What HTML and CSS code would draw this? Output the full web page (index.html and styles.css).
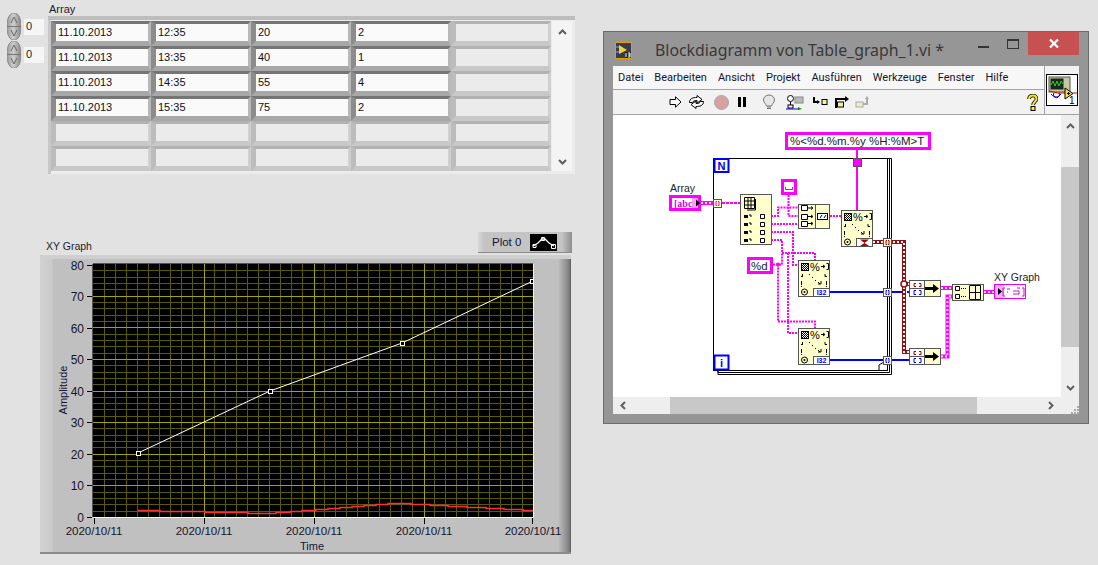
FILE: index.html
```html
<!DOCTYPE html>
<html lang="de">
<head>
<meta charset="utf-8">
<title>Table_graph_1.vi</title>
<link rel="stylesheet" href="styles.css">
</head>
<body>
<svg class="defs" width="0" height="0">
  <defs>
    <linearGradient id="spin" x1="0" x2="1" y1="0" y2="0">
      <stop offset="0" stop-color="#9a9a9a"/><stop offset=".45" stop-color="#cfcfcf"/><stop offset="1" stop-color="#858585"/>
    </linearGradient>
    <symbol id="spinner" viewBox="0 0 14 27">
      <path d="M7 0C11 0 14 4 14 13.500C14 23 11 27 7 27C3 27 0 23 0 13.500C0 4 3 0 7 0Z" fill="url(#spin)" stroke="#8a8a8a"/>
      <path d="M0 13.500H14" stroke="#777"/>
      <path d="M4 10L7 4L10 10M4 17L7 23L10 17" fill="none" stroke="#666"/>
    </symbol>
    <symbol id="checker" viewBox="0 0 8 8">
      <rect width="8" height="8" fill="#000"/>
      <path d="M1 1h1v1h-1zM3 1h1v1h-1zM5 1h1v1h-1zM2 2h1v1h-1zM4 2h1v1h-1zM6 2h1v1h-1zM1 3h1v1h-1zM3 3h1v1h-1zM5 3h1v1h-1zM2 4h1v1h-1zM4 4h1v1h-1zM6 4h1v1h-1zM1 5h1v1h-1zM3 5h1v1h-1zM5 5h1v1h-1zM2 6h1v1h-1zM4 6h1v1h-1zM6 6h1v1h-1z" fill="#fff"/>
    </symbol>
    <symbol id="fmt" viewBox="0 0 33 38">
      <rect x=".5" y=".5" width="31" height="36" class="node"/>
      <use href="#checker" x="3" y="3" width="8" height="8"/>
      <text x="12" y="11" class="pct">%</text>
      <path d="M23 6.500H26M25 5L27 6.500L25 8M28.500 3.500H30.500V9.500H28.500" fill="none" stroke="#000"/>
      <path d="M3 16.500H5M4.500 14V16M27 14V16.500H29" fill="none" stroke="#000"/>
      <path d="M11 14l1 1M14 17l1 1M17 20l1 1M20 22l2 2M20 24h3v-3" fill="none" stroke="#000"/>
      <path d="M3.500 21V25M3.500 26V27M28.500 21V25M28.500 26V27" stroke="#000"/>
      <circle cx="6.500" cy="32" r="3" fill="none" stroke="#000"/>
      <circle cx="6.500" cy="32" r="1" fill="#000"/>
    </symbol>
    <symbol id="bundle" viewBox="0 0 33 18">
      <rect x=".5" y=".5" width="31" height="16" class="node"/>
      <rect x="1" y="1" width="14" height="15" fill="#fff"/>
      <path d="M.5 8.500H15.500M15.500 .5V16.500" stroke="#555" fill="none"/>
      <path d="M7 3.500H5V6.500H7M10 3.500H12V6.500H10" fill="none" stroke="#a00000"/>
      <path d="M7 10.500H5V14.500H7M10 10.500H12V14.500H10" fill="none" stroke="#0000ff"/>
      <path d="M16 7H24V4L30 8.500L24 13V10H16Z" fill="#000"/>
    </symbol>
  </defs>
</svg>

<section class="indices">
  <div class="index">
    <svg class="spinner" width="14" height="27"><use href="#spinner"/></svg>
    <div class="index-box">0</div>
  </div>
  <div class="index">
    <svg class="spinner" width="14" height="27"><use href="#spinner"/></svg>
    <div class="index-box">0</div>
  </div>
</section>

<section class="array">
  <div class="label array-label">Array</div>
  <div class="array-frame">
    <div class="cells">
      <div class="cell">11.10.2013</div><div class="cell">12:35</div><div class="cell">20</div><div class="cell">2</div><div class="cell off"></div>
      <div class="cell">11.10.2013</div><div class="cell">13:35</div><div class="cell">40</div><div class="cell">1</div><div class="cell off"></div>
      <div class="cell">11.10.2013</div><div class="cell">14:35</div><div class="cell">55</div><div class="cell">4</div><div class="cell off"></div>
      <div class="cell">11.10.2013</div><div class="cell">15:35</div><div class="cell">75</div><div class="cell">2</div><div class="cell off"></div>
      <div class="cell off"></div><div class="cell off"></div><div class="cell off"></div><div class="cell off"></div><div class="cell off"></div>
      <div class="cell off"></div><div class="cell off"></div><div class="cell off"></div><div class="cell off"></div><div class="cell off"></div>
    </div>
    <div class="array-scroll">
      <svg width="9" height="6"><path d="M1 5L4.500 1.500L8 5" fill="none" stroke="#5c5c5c" stroke-width="2"/></svg>
      <svg width="9" height="6"><path d="M1 1L4.500 4.500L8 1" fill="none" stroke="#5c5c5c" stroke-width="2"/></svg>
    </div>
  </div>
</section>

<div class="label graph-label">XY Graph</div>

<div class="legend">
  <span class="legend-name">Plot 0</span>
  <svg class="legend-swatch" width="27" height="17" viewBox="0 0 27 17">
    <rect width="27" height="17" fill="#000"/>
    <path d="M3 12L8 9L12 5H15L19 9L24 12" fill="none" stroke="#fff" stroke-width="1.300"/>
    <path d="M3 10.500h3v3h-3zM11.500 3.500h3v3h-3zM21.500 10.500h4v4h-4z" fill="none" stroke="#fff"/>
  </svg>
</div>

<section class="graph">
  <svg class="plot" width="531" height="299" viewBox="40 255 531 299">
    <rect x="93" y="264" width="440" height="253" fill="#000"/>
    <path class="minor" d="M104 264V517M115 264V517M126 264V517M137 264V517M148 264V517M159 264V517M170 264V517M181 264V517M192 264V517M214.500 264V517M225 264V517M236 264V517M247 264V517M258 264V517M269 264V517M280 264V517M291 264V517M302 264V517M324 264V517M335 264V517M346 264V517M357 264V517M368 264V517M379 264V517M390 264V517M401 264V517M412 264V517M434 264V517M445 264V517M456 264V517M467 264V517M478 264V517M489 264V517M500 264V517M511 264V517M522 264V517"/>
    <path class="minor" d="M93 270H533M93 277H533M93 283H533M93 289H533M93 302H533M93 308H533M93 315H533M93 321H533M93 334H533M93 340H533M93 346H533M93 353H533M93 365H533M93 372H533M93 378H533M93 384H533M93 397H533M93 403H533M93 409H533M93 416H533M93 428H533M93 435H533M93 441H533M93 447H533M93 460H533M93 466H533M93 473H533M93 479H533M93 492H533M93 498H533M93 504H533M93 511H533"/>
    <path class="major" d="M204 264V517M314 264V517M424 264V517M93 296H533M93 327H533M93 359H533M93 391H533M93 422H533M93 454H533M93 485H533"/>
    <path class="plot-edge-dark" d="M92.500 264V517M93 263.500H533"/>
    <path class="plot-edge-light" d="M533.500 264V517.500M93 517.500H533"/>
    <polyline class="trace-white" points="138,453 270,391 402,343 533,281"/>
    <path class="trace-red" d="M138 510.500H160V511.500H205V512.500H248V513.500H276V512.500H290V511.500H302V510.500H316V509.500H328V508.500H340V507.500H352V506.500H364V505.500H376V504.500H388V503.500H411V504.500H430V505.500H448V506.500H467V507.500H486V508.500H504V509.500H523V510.500H533"/>
    <path class="marker" d="M136 451h4v4h-4zM268 389h4v4h-4zM400 341h4v4h-4zM530.500 279h2.500v4h-2.500z"/>
    <path class="tick" d="M87 265H92M87 296.500H92M87 328H92M87 359.500H92M87 391.500H92M87 422.500H92M87 454H92M87 485.500H92M87 517H92M94 518V524M204.500 518V524M314.500 518V524M424.500 518V524M532.500 518V524"/>
    <g class="ytext">
      <text x="84" y="270">80</text><text x="84" y="301">70</text><text x="84" y="333">60</text><text x="84" y="364">50</text><text x="84" y="396">40</text><text x="84" y="427">30</text><text x="84" y="459">20</text><text x="84" y="490">10</text><text x="84" y="522">0</text>
    </g>
    <g class="xtext">
      <text x="94" y="535">2020/10/11</text><text x="204" y="535">2020/10/11</text><text x="314" y="535">2020/10/11</text><text x="424" y="535">2020/10/11</text><text x="533" y="535">2020/10/11</text>
    </g>
    <text class="axis" x="312" y="550">Time</text>
    <text class="axis" transform="translate(67 390) rotate(-90)">Amplitude</text>
  </svg>
</section>

<section class="window">
  <header class="titlebar">
    <svg class="app-icon" width="17" height="17" viewBox="0 0 17 17">
      <rect x=".5" y=".5" width="16" height="16" fill="#3a3a4a" stroke="#e0a000"/>
      <path d="M4 3L12 8L4 12Z" fill="#ecd040"/>
      <path d="M1 5H4M1 10H4" stroke="#6ab0ff"/>
      <rect x="10" y="10" width="6" height="6" fill="#222"/>
      <path d="M11 11V15M13 11H15V15H13M13 13H15" stroke="#fff" fill="none"/>
    </svg>
    <h1 class="title">Blockdiagramm von Table_graph_1.vi *</h1>
    <div class="controls">
      <svg class="min" width="11" height="2"><rect width="11" height="2" fill="#333"/></svg>
      <svg class="max" width="12" height="10" viewBox="0 0 12 10"><rect x=".5" y=".5" width="11" height="9" fill="none" stroke="#333"/><rect x="0" y="0" width="12" height="2" fill="#333"/></svg>
      <div class="close">
        <svg width="10" height="9" viewBox="0 0 10 9"><path d="M1 .5L9 8.500M9 .5L1 8.500" stroke="#fff" stroke-width="2.200" fill="none"/></svg>
      </div>
    </div>
  </header>
  <div class="client">
    <div class="head">
      <div class="bars">
        <nav class="menu">
          <span>Datei</span><span>Bearbeiten</span><span>Ansicht</span><span>Projekt</span><span>Ausführen</span><span>Werkzeuge</span><span>Fenster</span><span>Hilfe</span>
        </nav>
        <div class="tools">
          <svg class="t-run" width="13" height="12" viewBox="0 0 13 12"><path d="M1 3.500H6.500V.8L12 6L6.500 11.200V8.500H1Z" fill="#fff" stroke="#000"/></svg>
          <svg class="t-cont" width="17" height="14" viewBox="0 0 17 14"><path d="M1.500 7.500C1.500 3.500 5 2.500 9 2.500V.5L14 4.500L9 8V5.500C6.500 5.500 5 6 4.500 7.500ZM15.500 6.500C15.500 10.500 12 11.500 8 11.500V13.500L3 9.500L8 6V8.500C10.500 8.500 12 8 12.500 6.500Z" fill="#fff" stroke="#000"/></svg>
          <svg class="t-stop" width="15" height="15" viewBox="0 0 15 15"><circle cx="7.500" cy="7.500" r="7" fill="#d9a0a0" stroke="#a8a8a8"/></svg>
          <svg class="t-pause" width="8" height="10" viewBox="0 0 8 10"><path d="M0 0H3V10H0ZM5 0H8V10H5Z" fill="#000"/></svg>
          <svg class="t-bulb" width="14" height="16" viewBox="0 0 14 16"><path d="M7 1C3.500 1 1.500 3.500 1.500 6C1.500 8.500 4 10 4.500 12H9.500C10 10 12.500 8.500 12.500 6C12.500 3.500 10.500 1 7 1Z" fill="#e6e6e6" stroke="#777"/><path d="M5 13H9M5 14.500H9" stroke="#777"/></svg>
          <svg class="t-retain" width="18" height="15" viewBox="0 0 18 15"><circle cx="4.500" cy="3.500" r="3" fill="#fff" stroke="#000"/><path d="M4.500 7V12" stroke="#000"/><rect x="9" y="2" width="8" height="6" fill="#bbb" stroke="#888"/><rect x="2" y="10" width="5" height="3" fill="#fff" stroke="#000"/><path d="M0 14H13" stroke="#00c"/><path d="M12 12L16 14L12 15Z" fill="#080"/></svg>
          <svg class="t-into" width="15" height="11" viewBox="0 0 15 11"><path d="M1 0V5H6" fill="none" stroke="#000" stroke-width="2"/><path d="M4 3L7 5L4 7Z" fill="#000"/><rect x="9" y="2.500" width="5" height="5" fill="#f5f0a0" stroke="#000"/></svg>
          <svg class="t-over" width="16" height="13" viewBox="0 0 16 13"><path d="M2 12V3H11" fill="none" stroke="#000" stroke-width="2"/><path d="M11 0L15 3L11 6Z" fill="#000"/><rect x="3.500" y="6" width="6" height="5" fill="#f5f0a0" stroke="#000"/></svg>
          <svg class="t-out" width="16" height="13" viewBox="0 0 16 13"><rect x="1" y="6" width="7" height="5" fill="#eeeec0" stroke="#aaa"/><path d="M8 8H12V3" fill="none" stroke="#aaa" stroke-width="2"/><path d="M10 3L12 0L14 3Z" fill="#aaa"/></svg>
          <svg class="t-help" width="11" height="17" viewBox="0 0 11 17"><path d="M2 5C2 2.500 4 1.500 6 1.500C8 1.500 9.500 3 9.500 5C9.500 7 6.500 8 6 11" fill="none" stroke="#000" stroke-width="3.500"/><path d="M2 5C2 2.500 4 1.500 6 1.500C8 1.500 9.500 3 9.500 5C9.500 7 6.500 8 6 11" fill="none" stroke="#ffe820" stroke-width="2"/><rect x="4" y="12.500" width="4" height="4" fill="#ffe820" stroke="#000"/></svg>
        </div>
      </div>
      <div class="vi-pane">
        <svg class="vi-icon" width="32" height="32" viewBox="0 0 32 32">
          <rect x=".5" y=".5" width="31" height="31" fill="#fff" stroke="#000"/>
          <rect x="3" y="3" width="21" height="15" fill="#c8c8a0" stroke="#555"/>
          <rect x="4.500" y="4.500" width="13" height="11" fill="#182818"/>
          <path d="M5 11L7 7L9 12L11 7L13 12L15 7L17 10" fill="none" stroke="#2fd02f"/>
          <path d="M5 20C8 24 12 24 15 20M8 19A3 3 0 1 0 13 19" fill="none" stroke="#00a"/>
          <path d="M3 17L12 19H20" stroke="#e00000" fill="none"/>
          <path d="M19 14L27 19.500L19 25Z" fill="#ffe820" stroke="#000"/>
          <path d="M21 19.500H24M22.500 18V21" stroke="#000"/>
          <path d="M27 19H31" stroke="#e00000"/>
          <text class="vi-num" x="23" y="30">1</text>
        </svg>
      </div>
    </div>
    <div class="work">
      <svg class="diagram" width="448" height="282" viewBox="613 115 448 282">
        <rect x="613" y="115" width="448" height="282" fill="#fff"/>

        <!-- loop -->
        <path class="loop-back" d="M718 371V374.500H891.500V158.500H888M718 369V372.500H889.500V158.500"/>
        <rect class="loop" x="713.500" y="158.500" width="174" height="212"/>
        <path class="loop" d="M879 370L879 365L884 362"/>
        <rect class="loop-term" x="714.500" y="159" width="14" height="13"/>
        <text class="loop-n" x="721.500" y="170">N</text>
        <rect class="loop-term" x="714.500" y="355.500" width="14" height="14"/>
        <text class="loop-n" x="721.500" y="367">i</text>

        <!-- string wires -->
        <path class="w-s" d="M771 216H778V207.500H798"/>
        <path class="w-s" d="M771 224H798"/>
        <path class="w-s" d="M788.500 195V216H798"/>
        <path class="w-s" d="M771 232H793V265H798"/>
        <path class="w-s" d="M771 240H782V253H815V260"/>
        <path class="w-s" d="M788 253V333H798"/>
        <path class="w-s" d="M773 264.500H782V253"/>
        <path class="w-s" d="M778 264.500V321.500H815V328"/>
        <path class="w-s" d="M830 216H841"/>
        <path class="w-solid" d="M857 149V210"/>
        <circle class="junction" cx="778" cy="264.500" r="2"/>

        <!-- array wires -->
        <path class="w-sa" d="M701 203H713"/>
        <path class="w-sa-d" d="M701 203H713"/>
        <path class="w-s2" d="M722 203H740"/>
        <path class="w-sa" d="M941 288H952M941 356.500H947.500V296.500H952M984 292H994"/>
        <path class="w-sa-d" d="M941 288H952M941 356.500H947.500V296.500H952M984 292H994"/>

        <!-- cluster / error wire -->
        <path class="w-r" d="M873 242H904V352H909M904 284H909"/>
        <path class="w-r-d" d="M873 242H904V352H909M904 284H909"/>
        <circle class="r-junction" cx="904" cy="284" r="3"/>

        <!-- numeric wires -->
        <path class="w-b" d="M830 292H883M892 292H902M907 292H909M830 360H883M892 360H909"/>

        <!-- tunnels -->
        <rect class="tunnel" x="713.500" y="199.500" width="8" height="8"/>
        <path class="t-pink" d="M717 201.500H716V205.500H717M718 201.500H719V205.500H718"/>
        <rect class="tunnel" x="883.500" y="238.500" width="8" height="8"/>
        <path class="t-red" d="M887 240.500H886V244.500H887M888 240.500H889V244.500H888"/>
        <rect class="tunnel" x="883.500" y="288.500" width="8" height="8"/>
        <path class="t-blue" d="M887 290.500H886V294.500H887M888 290.500H889V294.500H888"/>
        <rect class="tunnel" x="883.500" y="356.500" width="8" height="8"/>
        <path class="t-blue" d="M887 358.500H886V362.500H887M888 358.500H889V362.500H888"/>
        <rect x="853.500" y="158.500" width="8" height="8" fill="#ff00ff" stroke="#555"/>

        <!-- constants -->
        <rect class="const" x="786.500" y="133.500" width="143" height="15"/>
        <text class="const-text" x="790" y="145">%&lt;%d.%m.%y %H:%M&gt;T</text>
        <rect class="const" x="782.500" y="180.500" width="13" height="13"/>
        <path d="M785.500 187V189.500H792.500V187" fill="none" stroke="#e000e0"/>
        <rect class="const" x="748.500" y="258.500" width="23" height="14"/>
        <text class="const-text" x="751" y="270">%d</text>

        <!-- labels and terminals -->
        <text class="wire-label" x="670" y="192">Array</text>
        <rect class="const" x="670.500" y="196.500" width="29" height="13"/>
        <rect x="692" y="198" width="6" height="10" fill="#f9a0f9"/>
        <text class="term-text" x="674" y="207">[abc</text>
        <path d="M696 199.500L700 203L696 206.500Z" fill="#000"/>

        <text class="wire-label" x="994" y="281">XY Graph</text>
        <rect x="994.500" y="284.500" width="31" height="14" fill="#fff" stroke="#f000f0"/>
        <rect x="995" y="285" width="9" height="13" fill="#f4b0f4"/>
        <path d="M998 288L1002 291.500L998 295Z" fill="#000"/>
        <path d="M1005 288H1003V296H1005M1022 288H1024V296H1022M1007 289H1010M1007 292H1008M1013 291H1019V294H1013M1017 288H1020" fill="none" stroke="#e000e0"/>

        <!-- index array node -->
        <rect class="node" x="740.500" y="194.500" width="31" height="50"/>
        <path d="M744.500 197.500H754.500V208.500H744.500ZM744.500 201H754.500M744.500 205H754.500M748 197.500V208.500M751 197.500V208.500M755.500 199V210H747" fill="none" stroke="#000"/>
        <path class="mini" d="M744 216.500H748M744 224.500H748M744 232.500H748M744 240.500H748" stroke-width="3"/>
        <path class="mini-dots" d="M750 214V216H752M750 222V224H752M750 230V232H752M750 238V240H752"/>
        <path class="mini-box" d="M760.500 214.500h4v4h-4zM760.500 222.500h4v4h-4zM760.500 230.500h4v4h-4zM760.500 238.500h4v4h-4z"/>

        <!-- concat node -->
        <rect class="node" x="798.500" y="204.500" width="31" height="24"/>
        <path d="M815.500 205V228" stroke="#555"/>
        <path class="mini-box" d="M801.500 205.500h6v5h-6zM801.500 214.500h6v5h-6zM801.500 221.500h6v5h-6z"/>
        <path d="M808 208H812M808 216.500H812M808 223.500H812M811 206.500L813 208L811 209.500M811 215L813 216.500L811 218M811 222L813 223.500L811 225" fill="none" stroke="#000"/>
        <rect x="817.500" y="213.500" width="10" height="6" fill="#fff" stroke="#000"/>
        <path d="M820 218L822 215M824 218L826 215" stroke="#000"/>

        <!-- format nodes -->
        <use href="#fmt" x="841" y="210" width="33" height="38"/>
        <rect x="856.500" y="238.500" width="16" height="8" fill="#fff" stroke="#555"/>
        <path d="M860 239.500H869L864.500 243L869 246H860L864.500 243Z" fill="#a00000"/>

        <use href="#fmt" x="798" y="260" width="33" height="38"/>
        <rect class="i32-box" x="813.500" y="288.500" width="16" height="8"/>
        <text class="i32" x="821.500" y="295">I32</text>

        <use href="#fmt" x="798" y="328" width="33" height="38"/>
        <rect class="i32-box" x="813.500" y="356.500" width="16" height="8"/>
        <text class="i32" x="821.500" y="363">I32</text>

        <!-- bundle nodes -->
        <use href="#bundle" x="909" y="280" width="33" height="18"/>
        <use href="#bundle" x="909" y="348" width="33" height="18"/>

        <!-- build array -->
        <rect class="node" x="952.500" y="284.500" width="31" height="16"/>
        <path class="mini-box" d="M955.500 286.500h4v4h-4zM955.500 294.500h4v4h-4z"/>
        <path d="M961 288.500H966M961 296.500H966" stroke="#000" stroke-dasharray="1 1"/>
        <path d="M969.500 285.500V299.500M970 285.500H980.500V299.500H970M970 292.500H980.500M975.500 285.500V299.500" fill="none" stroke="#000"/>
      </svg>
      <div class="vscroll">
        <svg width="9" height="6"><path d="M1 5L4.500 1.500L8 5" fill="none" stroke="#606060" stroke-width="2"/></svg>
        <div class="vthumb"></div>
        <svg width="9" height="6"><path d="M1 1L4.500 4.500L8 1" fill="none" stroke="#606060" stroke-width="2"/></svg>
      </div>
    </div>
    <div class="hscroll">
      <svg width="6" height="9"><path d="M5 1L1.500 4.500L5 8" fill="none" stroke="#606060" stroke-width="2"/></svg>
      <div class="hthumb"></div>
      <svg class="harrow" width="6" height="9"><path d="M1 1L4.500 4.500L1 8" fill="none" stroke="#606060" stroke-width="2"/></svg>
      <svg class="grip" width="8" height="8"><path d="M6 0h2v2h-2zM3 3h2v2h-2zM6 3h2v2h-2zM0 6h2v2h-2zM3 6h2v2h-2zM6 6h2v2h-2z" fill="#a8a8a8"/></svg>
    </div>
  </div>
</section>
</body>
</html>
```

FILE: styles.css
```css
* { box-sizing: border-box; }

html, body {
  margin: 0;
  width: 1098px;
  height: 565px;
  overflow: hidden;
}

body {
  position: relative;
  background: #e2e2e2;
  color: #1c1c1c;
  font-family: "Liberation Sans", Arial, sans-serif;
  font-size: 11px;
}

.defs { position: absolute; }

.label { line-height: 12px; color: #1c1c2c; }

/* Front panel objects sit on a free canvas */
.indices {
  position: absolute;
  left: 7px;
  top: 13px;
  display: flex;
  flex-direction: column;
  gap: 1px;
}
.index { display: flex; align-items: flex-start; height: 27px; gap: 3px; }
.spinner { display: block; }
.index-box {
  width: 20px;
  height: 16px;
  margin-top: 6px;
  padding-left: 2px;
  line-height: 14px;
  background: #f6f6f6;
}

.array { position: absolute; left: 48px; top: 3px; }
.array-label { padding-left: 1px; height: 13px; }
.array-frame {
  display: flex;
  width: 527px;
  height: 158px;
  padding: 5px 3px 3px 3px;
  background: #ececec;
  box-shadow: inset 0 4px 0 #bdbdbd, inset 3px 0 0 #c8c8c8;
}
.cells {
  display: grid;
  grid-template-columns: repeat(5, 100px);
  grid-auto-rows: 25px;
  background: #c4c4c4;
}
.cell {
  padding-left: 2px;
  line-height: 17px;
  color: #101018;
  background: #fafafa;
  border-style: solid;
  border-width: 3px 3px 5px 5px;
  border-color: #757575 #b8b8b8 #a8a8a8 #8c8c8c;
}
.cell.off {
  background: #ebebeb;
  border-color: #b2b2b2 #cfcfcf #c8c8c8 #bcbcbc;
}
.array-scroll {
  display: flex;
  flex-direction: column;
  justify-content: space-between;
  align-items: center;
  width: 20px;
  margin-left: 1px;
  padding: 8px 0 6px;
  background: #f4f4f4;
}
.array-scroll svg { display: block; }

.graph-label { position: absolute; left: 46px; top: 240px; font-size: 10.500px; }

.legend {
  position: absolute;
  left: 478px;
  top: 232px;
  width: 94px;
  height: 21px;
  display: flex;
  align-items: center;
  background: linear-gradient(90deg, #d8d8d8 0, #c4c4c4 6px, #c4c4c4 84px, #8e8e8e 94px);
  border-bottom: 1px solid #8a8a8a;
}
.legend-name { margin-left: 14px; width: 38px; font-size: 11.500px; color: #14143c; }
.legend-swatch { display: block; }

.graph {
  position: absolute;
  left: 40px;
  top: 255px;
  width: 531px;
  height: 299px;
  background: linear-gradient(90deg, #d2d2d2 0, #cacaca 12px, #c0c0c0 13px, #c0c0c0 518px, #808080 529px, #5c5c5c 531px);
  box-shadow: inset 0 4px 0 #cfcfcf, inset 0 -2px 0 #8c8c8c;
}
.plot { display: block; }

.minor { stroke: #5a5a00; stroke-width: 1; fill: none; shape-rendering: crispEdges; }
.major { stroke: #a4a400; stroke-width: 1; fill: none; shape-rendering: crispEdges; }
.plot-edge-dark { stroke: #555; fill: none; }
.plot-edge-light { stroke: #f4f4f4; fill: none; }
.trace-white { stroke: #fff; fill: none; }
.trace-red { stroke: #ff3030; stroke-width: 1.500; fill: none; }
.marker { fill: #000; stroke: #fff; shape-rendering: crispEdges; }
.tick { stroke: #000; fill: none; shape-rendering: crispEdges; }
.ytext text { font-size: 12px; text-anchor: end; fill: #15152a; }
.xtext text { font-size: 11.500px; text-anchor: middle; fill: #15152a; }
.axis { font-size: 11px; text-anchor: middle; fill: #14143c; }

/* Block diagram window */
.window {
  position: absolute;
  left: 603px;
  top: 31px;
  width: 486px;
  height: 393px;
  display: flex;
  flex-direction: column;
  background: #969696;
  border: 1px solid #6c6c6c;
}
.titlebar {
  position: relative;
  height: 34px;
  display: flex;
  align-items: center;
  padding-left: 11px;
}
.app-icon { display: block; margin-top: 3px; }
.title {
  margin: 2px 0 0 23px;
  font: 400 15.850px "Noto Sans", "Open Sans", sans-serif;
  color: #383838;
  white-space: nowrap;
}
.controls {
  margin-left: auto;
  margin-right: 9px;
  align-self: flex-start;
  display: flex;
  align-items: flex-start;
}
.min { margin-top: 14px; display: block; }
.max { margin: 7px 0 0 18px; display: block; }
.close {
  width: 51px;
  height: 23px;
  margin-left: 9px;
  background: #c75050;
  display: flex;
  align-items: center;
  justify-content: center;
}
.close svg { display: block; }

.client {
  width: 466px;
  margin-left: 9px;
  display: flex;
  flex-direction: column;
  background: #f0f0f0;
}
.head { display: flex; height: 49px; }
.bars { flex: 1; display: flex; flex-direction: column; }
.menu {
  height: 24px;
  display: flex;
  align-items: center;
  gap: 11px;
  padding-left: 5px;
  background: #f7f7f7;
  border-bottom: 1px solid #a4a4a4;
  font: 400 11px Roboto, "Noto Sans", sans-serif;
  color: #16162c;
}
.tools {
  height: 25px;
  display: flex;
  align-items: center;
  padding: 0 6px 0 56px;
  background: #f2f2f2;
  border-bottom: 1px solid #a4a4a4;
}
.tools svg { display: block; flex: none; }
.t-cont { margin-left: 6px; }
.t-stop { margin-left: 9px; }
.t-pause { margin-left: 9px; }
.t-bulb { margin-left: 16px; }
.t-retain { margin-left: 10px; }
.t-into { margin-left: 9px; }
.t-over { margin-left: 6px; }
.t-out { margin-left: 5px; }
.t-help { margin-left: auto; }
.vi-pane {
  width: 35px;
  padding: 8px 0 0 1px;
  background: #f2f2f2;
  border-left: 1px solid #a4a4a4;
  border-bottom: 1px solid #a4a4a4;
}
.vi-icon { display: block; }
.vi-num { font-size: 10px; fill: #000; }

.work { display: flex; height: 282px; }
.diagram { display: block; flex: none; }

.vscroll {
  flex: 1;
  display: flex;
  flex-direction: column;
  align-items: center;
  padding-top: 8px;
  background: #eeeeee;
}
.vscroll svg { display: block; }
.vthumb { width: 100%; height: 180px; margin: 38px 0 38px; background: #c8c8c8; }

.hscroll {
  height: 17px;
  display: flex;
  align-items: center;
  padding-left: 7px;
  background: #eeeeee;
}
.hscroll svg { display: block; }
.hthumb { width: 308px; height: 100%; margin-left: 44px; background: #c8c8c8; }
.harrow { margin-left: 71px; }
.grip { margin-left: 17px; align-self: flex-end; }

/* Diagram parts */
.loop { fill: none; stroke: #000; }
.loop-back { fill: none; stroke: #000; }
.loop-term { fill: #fff; stroke: #0000ff; stroke-width: 2; }
.loop-n { font-size: 11px; font-weight: 700; text-anchor: middle; fill: #0000ff; }
.node { fill: #ffffcc; stroke: #555; }
.pct { font-size: 11px; fill: #000; }
.tunnel { fill: #ffffcc; stroke: #555; }
.t-pink { fill: none; stroke: #e000e0; }
.t-red { fill: none; stroke: #a00000; }
.t-blue { fill: none; stroke: #0000ff; }

.w-s { fill: none; stroke: #ff00ff; stroke-width: 2; stroke-dasharray: 2 1; }
.w-solid { fill: none; stroke: #ff00ff; stroke-width: 2; }
.w-s2 { fill: none; stroke: #ff00ff; stroke-width: 2; stroke-dasharray: 3 1; }
.w-sa { fill: none; stroke: #ff00ff; stroke-width: 4; }
.w-sa-d { fill: none; stroke: #ffe0ff; stroke-width: 2; stroke-dasharray: 2 2; }
.w-r { fill: none; stroke: #8f1010; stroke-width: 4; }
.w-r-d { fill: none; stroke: #fff; stroke-width: 2; stroke-dasharray: 2 2; }
.r-junction { fill: #fff; stroke: #8f1010; stroke-width: 1.500; }
.w-b { fill: none; stroke: #0000ff; stroke-width: 2; }
.junction { fill: #ff00ff; }

.const { fill: #fff; stroke: #ff00ff; stroke-width: 3; }
.const-text { font-size: 11.500px; fill: #1a1a2c; }
.wire-label { font-size: 10.500px; fill: #1c1c2c; }
.term-text { font: 700 10px "Liberation Serif", serif; fill: #e000e0; }

.mini { stroke: #000; fill: none; }
.mini-dots { stroke: #000; fill: none; }
.mini-box { fill: #fff; stroke: #000; }
.i32-box { fill: #fff; stroke: #555; }
.i32 { font-size: 7px; font-weight: 700; text-anchor: middle; fill: #0000ff; }
```
